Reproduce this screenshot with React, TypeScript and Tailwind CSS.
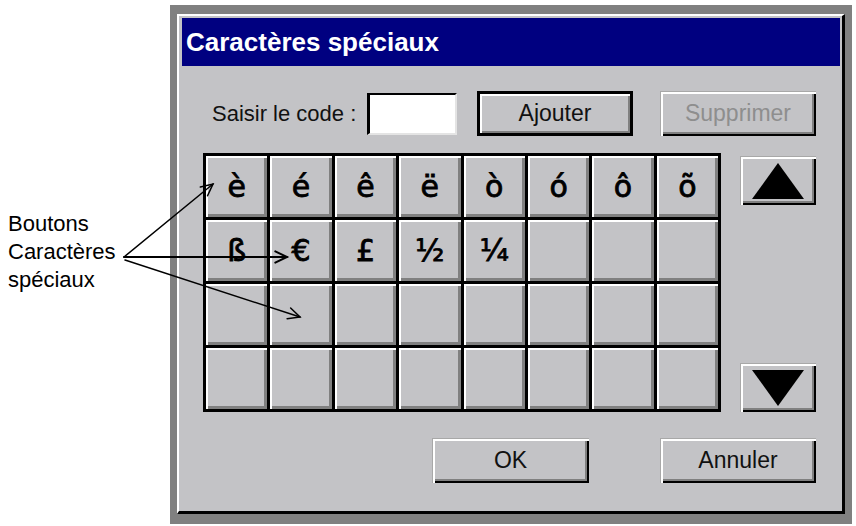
import React from 'react'

const CHARS = ['è', 'é', 'ê', 'ë', 'ò', 'ó', 'ô', 'õ', 'ß', '€', '£', '½', '¼']

const bevel =
  'bg-[#c3c3c6] shadow-[inset_1px_1px_0_#a8a8a8,inset_3px_3px_0_#ffffff,inset_-2px_-2px_0_#000000,inset_-4px_-4px_0_#808080]'

function Button({ label, disabled, className = '' }: { label: string; disabled?: boolean; className?: string }) {
  return (
    <div
      className={`flex h-[45px] w-[156px] items-center justify-center text-[23px] ${bevel} ${
        disabled ? 'text-[#8e8e8e]' : 'text-[#111]'
      } ${className}`}
    >
      {label}
    </div>
  )
}

function ArrowButton({ down }: { down?: boolean }) {
  return (
    <div className={`flex h-[49px] w-[76px] items-center justify-center ${bevel}`}>
      <svg width="52" height="36" viewBox="0 0 52 36">
        {down ? <polygon points="0,0 52,0 26,36" fill="#000" /> : <polygon points="26,0 52,36 0,36" fill="#000" />}
      </svg>
    </div>
  )
}

// flèche ouverte, calculée à partir du point de départ et de la pointe
function Pointer({ x1, y1, x2, y2, w = 1.5 }: { x1: number; y1: number; x2: number; y2: number; w?: number }) {
  const a = Math.atan2(y2 - y1, x2 - x1)
  const len = 13
  const spread = 0.45
  const h1 = [x2 - len * Math.cos(a - spread), y2 - len * Math.sin(a - spread)]
  const h2 = [x2 - len * Math.cos(a + spread), y2 - len * Math.sin(a + spread)]
  return (
    <g stroke="#000" strokeWidth={w} fill="none" strokeLinecap="round">
      <line x1={x1} y1={y1} x2={x2} y2={y2} />
      <polyline points={`${h1[0]},${h1[1]} ${x2},${y2} ${h2[0]},${h2[1]}`} />
    </g>
  )
}

export default function App() {
  const cells = Array.from({ length: 32 }, (_, i) => CHARS[i] ?? '')

  return (
    <div className="relative flex h-[526px] w-[856px] overflow-hidden bg-white font-['Liberation_Sans',Arial,sans-serif]">
      {/* Légende */}
      <div className="w-[170px] pl-[8px] pt-[210px] text-[22px] leading-[28px] text-black">
        <div>Boutons</div>
        <div>Caractères</div>
        <div>spéciaux</div>
      </div>

      {/* Boîte de dialogue */}
      <div className="mt-[5px] h-[519px] w-[682px] bg-[#808080] pl-[7px] pt-[9px]">
        <div className="flex h-[500px] w-[668px] flex-col border-b-[3px] border-l-2 border-r-[3px] border-t-2 border-b-black border-l-white border-r-black border-t-white bg-[#c3c3c6]">
          <div className="ml-[3px] mr-[2px] mt-[2px] flex h-[48px] items-center bg-[#000080] pl-[4px] text-[26px] font-bold text-white">
            Caractères spéciaux
          </div>

          <div className="mt-[25px] flex h-[45px] items-center pl-[33px]">
            <span className="w-[155px] text-[22px] text-[#111]">Saisir le code :</span>
            <div className="h-[42px] w-[90px] border-b-2 border-l-[3px] border-r-2 border-t-2 border-b-[#e4e4e4] border-l-black border-r-[#e4e4e4] border-t-black bg-white" />
            <div className="ml-[20px] h-[45px] w-[156px] border-[3px] border-black">
              <div className="flex h-full w-full items-center justify-center bg-[#c3c3c6] text-[23px] text-[#111] shadow-[inset_2px_2px_0_#ffffff,inset_-2px_-2px_0_#808080]">
                Ajouter
              </div>
            </div>
            <Button label="Supprimer" disabled className="ml-[27px]" />
          </div>

          <div className="mt-[17px] flex pl-[24px]">
            <div className="grid h-[259px] w-[518px] grid-cols-8 grid-rows-4 gap-[3px] bg-black p-[3px]">
              {cells.map((c, i) => (
                <div
                  key={i}
                  className="flex items-center justify-center bg-[#c3c3c6] font-['DejaVu_Sans',sans-serif] text-[30px] text-black shadow-[inset_2px_2px_0_#ffffff,inset_-3px_-3px_0_#808080] [-webkit-text-stroke:0.8px_#000]"
                >
                  {c}
                </div>
              ))}
            </div>
            <div className="ml-[19px] flex h-[259px] flex-col justify-between pt-[3px]">
              <ArrowButton />
              <ArrowButton down />
            </div>
          </div>

          <div className="mt-[26px] flex pl-[253px]">
            <Button label="OK" className="w-[157px]" />
            <Button label="Annuler" className="ml-[71px]" />
          </div>
        </div>
      </div>

      {/* Flèches de la légende */}
      <svg className="pointer-events-none absolute left-0 top-0" width="856" height="526">
        <Pointer x1={124} y1={257} x2={213} y2={184} />
        <Pointer x1={124} y1={257} x2={287} y2={257} w={2} />
        <Pointer x1={125} y1={260} x2={300} y2={317} />
      </svg>
    </div>
  )
}
